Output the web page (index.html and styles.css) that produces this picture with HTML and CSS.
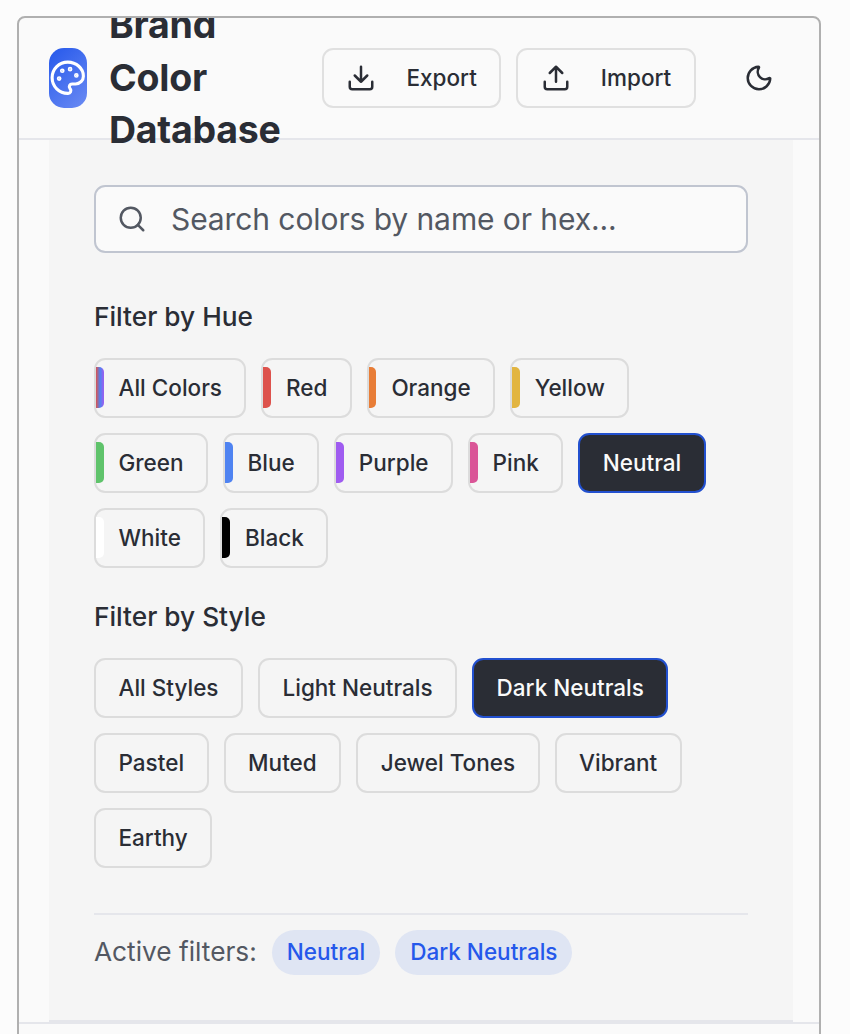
FILE: index.html
```html
<!DOCTYPE html>
<html lang="en">
<head>
<meta charset="utf-8">
<title>Brand Color Database</title>
<link rel="stylesheet" href="styles.css">
</head>
<body>
<div class="frame">
  <header class="header">
    <div class="logo">
      <svg class="logo-icon" viewBox="0 0 24 24"><path d="M12 22a1 1 0 0 1 0-20 10 9 0 0 1 10 9 5 5 0 0 1-5 5h-2.25a1.75 1.75 0 0 0-1.4 2.8l.3.4a1.75 1.75 0 0 1-1.4 2.8z"/><circle cx="13.5" cy="6.5" r=".5"/><circle cx="17.5" cy="10.5" r=".5"/><circle cx="6.5" cy="12.5" r=".5"/><circle cx="8.5" cy="7.5" r=".5"/></svg>
    </div>
    <h1 class="title">Brand Color Database</h1>
    <div class="actions">
      <button class="btn action export"><svg class="icon" viewBox="0 0 24 24"><path d="M12 15V3M21 15v4a2 2 0 0 1-2 2H5a2 2 0 0 1-2-2v-4M7 10l5 5 5-5"/></svg>Export</button>
      <button class="btn action"><svg class="icon" viewBox="0 0 24 24"><path d="M12 3v12M17 8l-5-5-5 5M21 15v4a2 2 0 0 1-2 2H5a2 2 0 0 1-2-2v-4"/></svg>Import</button>
      <button class="theme" aria-label="Toggle theme"><svg class="icon" viewBox="0 0 24 24"><path d="M20.985 12.486a9 9 0 1 1-9.473-9.472c.405-.022.617.46.402.803a6 6 0 0 0 8.268 8.268c.344-.215.825-.004.803.401"/></svg></button>
    </div>
  </header>
  <main class="panel">
    <div class="search">
      <svg class="icon" viewBox="0 0 24 24"><circle cx="11" cy="11" r="8"/><path d="m21 21-4.34-4.34"/></svg>
      <span>Search colors by name or hex...</span>
    </div>
    <h2 class="label">Filter by Hue</h2>
    <div class="filters hues">
      <button class="btn hue all">All Colors</button>
      <button class="btn hue red">Red</button>
      <button class="btn hue orange">Orange</button>
      <button class="btn hue yellow">Yellow</button>
      <button class="btn hue green">Green</button>
      <button class="btn hue blue">Blue</button>
      <button class="btn hue purple">Purple</button>
      <button class="btn hue pink">Pink</button>
      <button class="btn active">Neutral</button>
      <button class="btn hue white">White</button>
      <button class="btn hue black">Black</button>
    </div>
    <h2 class="label">Filter by Style</h2>
    <div class="filters">
      <button class="btn">All Styles</button>
      <button class="btn">Light Neutrals</button>
      <button class="btn active">Dark Neutrals</button>
      <button class="btn">Pastel</button>
      <button class="btn">Muted</button>
      <button class="btn">Jewel Tones</button>
      <button class="btn">Vibrant</button>
      <button class="btn">Earthy</button>
    </div>
    <div class="summary">
      <span class="summary-label">Active filters:</span>
      <span class="chip">Neutral</span>
      <span class="chip">Dark Neutrals</span>
    </div>
  </main>
  <div class="results"></div>
</div>
</body>
</html>
```
FILE: styles.css
```css
* { box-sizing: border-box; }
html { height: 100%; }
body {
  margin: 0;
  height: 1034px;
  overflow: hidden;
  padding: 16px 29px 0 17px;
  background: #fcfcfc;
  color: #2a2d35;
  font-family: Inter, sans-serif;
}
.frame {
  height: 1060px;
  border: 2px solid #b0b0b0;
  border-radius: 8px;
  background: #fafafa;
  overflow: hidden;
}
.header {
  position: relative;
  display: flex;
  align-items: center;
  height: 122px;
  padding: 0 30px;
  border-bottom: 2px solid #e5e6eb;
}
.logo {
  display: flex;
  align-items: center;
  justify-content: center;
  flex: none;
  width: 38px;
  height: 60px;
  margin-right: 22px;
  border-radius: 15px;
  background: linear-gradient(135deg, #2558eb, #6b8bf3);
}
svg {
  fill: none;
  stroke: currentColor;
  stroke-width: 2;
  stroke-linecap: round;
  stroke-linejoin: round;
  flex: none;
}
.logo-icon { width: 37.5px; height: 37.5px; color: #fff; }
.logo-icon circle { fill: currentColor; }
.icon { width: 30px; height: 30px; }
.title {
  width: 183px;
  margin: 0;
  font-size: 37.5px;
  line-height: 52.5px;
  font-weight: 700;
  letter-spacing: -0.25px;
}
.actions { display: flex; gap: 15px; margin-left: 30px; }
.btn {
  position: relative;
  display: flex;
  align-items: center;
  height: 60px;
  padding: 0 22.5px;
  border: 2px solid #dcdcdc;
  border-radius: 11.25px;
  background: transparent;
  color: inherit;
  font: 500 22.5px/30px Inter, sans-serif;
  white-space: nowrap;
}
.action { gap: 30px; border-color: #e0e0e0; }
.export { gap: 30.5px; padding-left: 22px; }
.theme {
  display: flex;
  align-items: center;
  justify-content: center;
  width: 60px;
  height: 60px;
  margin-left: 18px;
  padding: 0;
  border: 0;
  background: none;
  color: inherit;
}
.panel {
  margin: 0 26px 0 30px;
  height: 882px;
  padding: 45px;
  border-bottom: 2px solid #e5e6eb;
  background: #f5f5f5;
}
.search {
  display: flex;
  align-items: center;
  gap: 24px;
  height: 68px;
  padding: 0 21px;
  border: 2px solid #c0c5d0;
  border-radius: 11.25px;
  background: #fafafa;
  color: #535862;
  font-size: 30px;
  letter-spacing: -0.09px;
}
.label {
  margin: 45px 0 22.5px;
  font-size: 26.25px;
  line-height: 37.5px;
  font-weight: 500;
}
.hues + .label { margin-top: 30px; }
.filters { display: flex; flex-wrap: wrap; gap: 15px; }
.hue::before {
  content: "";
  position: absolute;
  left: 0;
  top: 7px;
  width: 8px;
  height: 41px;
  border-radius: 0 5px 5px 0;
  background: var(--hue);
}
.all { --hue: linear-gradient(90deg, #dd524c, #4f83f1 50%, #9f5cf0); }
.red { --hue: #dd524c; }
.orange { --hue: #e87d37; }
.yellow { --hue: #e2b541; }
.green { --hue: #5fc36b; }
.blue { --hue: #4f83f1; }
.purple { --hue: #9f5cf0; }
.pink { --hue: #da5597; }
.white { --hue: #fff; }
.black { --hue: #000; }
.orange::before { width: 7px; }
.active { background: #2a2d35; border-color: #2250cf; color: #fafafa; }
.summary {
  display: flex;
  align-items: center;
  gap: 15px;
  margin-top: 45px;
  padding-top: 15px;
  border-top: 2px solid #e5e6eb;
  color: #535862;
  font-size: 26.25px;
}
.summary-label { line-height: 32px; padding-bottom: 2px; }
.chip {
  height: 45px;
  padding: 0 15px;
  border-radius: 23px;
  background: #dfe5f3;
  color: #2558eb;
  font-size: 22.5px;
  line-height: 43px;
  font-weight: 500;
}
.results { height: 60px; border-top: 2px solid #e5e6eb; }
```
